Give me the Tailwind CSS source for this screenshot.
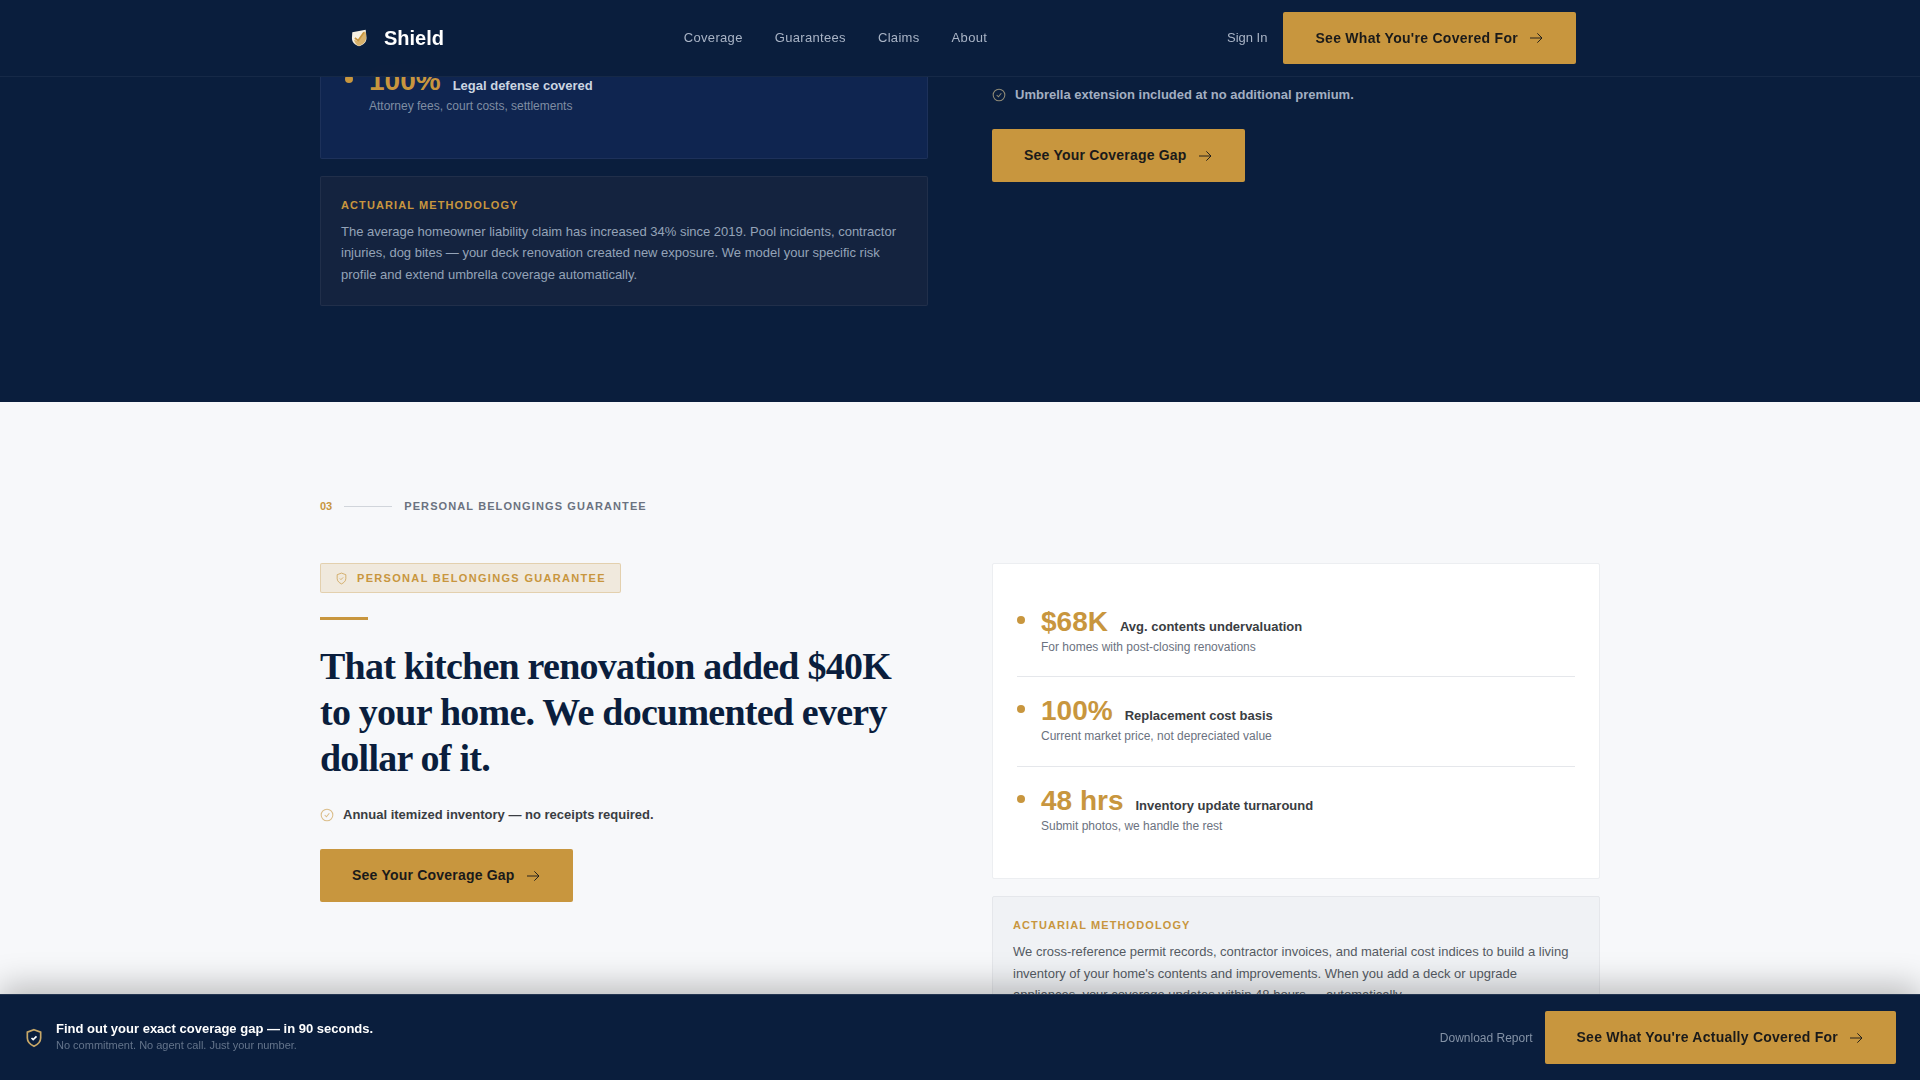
<!DOCTYPE html>
<html lang="en">
<head>
    <meta charset="UTF-8">
    <meta name="viewport" content="width=device-width, initial-scale=1.0">
    <title>Shield - Coverage Guarantees</title>
    <script src="https://cdn.jsdelivr.net/npm/@tailwindcss/browser@4"></script>
</head>
<body class="h-screen overflow-hidden bg-[#0a1e3d] font-['Liberation_Sans',Arial,sans-serif]">
    <!-- Navigation Bar -->
    <nav class="fixed top-0 left-0 right-0 z-20 h-[77px] bg-[#0a1e3d]/97 backdrop-blur border-b border-white/5">
        <div class="w-[1280px] h-full mx-auto px-6 flex items-center justify-between">
            <div class="flex items-center gap-[15px]">
                <svg class="ml-[5px]" width="20" height="20" viewBox="0 0 24 24">
                    <path d="M4 5 L20 2 L21 12 C21 17 17 20.5 12 22 C7 20.5 3.5 17 3.5 12 Z" fill="#f6f0e2"/>
                    <path d="M6 14 L11 16 L19 4 L20.5 6 L20.5 12 C20.5 16 17 20 12 21.5 C9 20.5 7 18 6 14 Z" fill="#d8b26c"/>
                    <path d="M7 12 L11 15 L18 5" fill="none" stroke="#c8963e" stroke-width="2"/>
                </svg>
                <span class="text-white text-[20px] font-bold">Shield</span>
            </div>
            <div class="flex items-center gap-8 text-[13px] tracking-[0.025em] text-[#a9b4c6]">
                <a>Coverage</a>
                <a>Guarantees</a>
                <a>Claims</a>
                <a>About</a>
            </div>
            <div class="flex items-center gap-4">
                <a class="text-[13px] text-[#a9b4c6]">Sign In</a>
                <a class="h-[52px] px-8 flex items-center gap-[10px] rounded-[2px] bg-[#c8963e] text-[#1a1a1a] text-[14px] font-bold tracking-[0.28px]">
                    See What You're Covered For
                    <svg width="16" height="16" viewBox="0 0 24 24" fill="none" stroke="currentColor" stroke-width="1.4"><path d="M3 12h18M14 5l7 7-7 7"/></svg>
                </a>
            </div>
        </div>
    </nav>

    <!-- Section 02, scrolled past the top -->
    <section class="bg-[#0a1e3d] pb-24">
        <div class="w-[1280px] mx-auto grid grid-cols-2 gap-16 items-start">
            <div class="flex flex-col gap-[17px]">
                <div class="pt-[46px] pb-[22px] px-6 bg-[#0f2550] border border-t-0 border-white/6 rounded-b-[2px]">
                    <div class="flex gap-4 pt-[19px] pb-[21px]">
                        <span class="w-2 h-2 mt-[10px] rounded-full bg-[#c8963e] shrink-0"></span>
                        <div>
                            <div class="flex items-baseline gap-3">
                                <span class="text-[28px] leading-8 font-bold text-[#c8963e]">100%</span>
                                <span class="text-[13px] font-bold text-[#cbd5e1]">Legal defense covered</span>
                            </div>
                            <p class="mt-px text-[12px] leading-[17px] text-[#7f8da3]">Attorney fees, court costs, settlements</p>
                        </div>
                    </div>
                </div>
                <div class="p-5 bg-[#14233f] border border-white/6 rounded-[2px]">
                    <p class="text-[11px] leading-4 mb-2 font-bold tracking-[0.1em] text-[#c8963e]">ACTUARIAL METHODOLOGY</p>
                    <p class="text-[13px] leading-[21.45px] text-[#94a3b8]">The average homeowner liability claim has increased 34% since 2019. Pool incidents, contractor injuries, dog bites — your deck renovation created new exposure. We model your specific risk profile and extend umbrella coverage automatically.</p>
                </div>
            </div>
            <div class="pt-[84px]">
                <div class="flex items-center gap-[9px] h-[21px] mb-6 text-[13px] font-bold text-[#a3afc2]">
                    <svg width="14" height="14" viewBox="0 0 24 24" fill="none" stroke="#8f8a76" stroke-width="1.8"><circle cx="12" cy="12" r="10"/><path d="M8 12l3 3 5-6"/></svg>
                    Umbrella extension included at no additional premium.
                </div>
                <a class="inline-flex items-center gap-[10px] h-[53px] px-8 rounded-[2px] bg-[#c8963e] text-[#1a1a1a] text-[14px] font-bold tracking-[0.21px]">
                    See Your Coverage Gap
                    <svg width="16" height="16" viewBox="0 0 24 24" fill="none" stroke="currentColor" stroke-width="1.4"><path d="M3 12h18M14 5l7 7-7 7"/></svg>
                </a>
            </div>
        </div>
    </section>

    <!-- Section 03 -->
    <section class="bg-[#f7f8fa] pt-24 h-[700px]">
        <div class="w-[1280px] mx-auto">
            <div class="flex items-center gap-3 h-4 mb-[49px]">
                <span class="text-[11px] font-bold text-[#c8963e]">03</span>
                <span class="w-12 h-px bg-[#d1d5db]"></span>
                <span class="text-[11px] font-bold tracking-[0.1em] text-[#6b7280]">PERSONAL BELONGINGS GUARANTEE</span>
            </div>
            <div class="grid grid-cols-2 gap-16 items-start">
                <div>
                    <div class="inline-flex items-center gap-[9px] h-[30px] px-[14px] bg-[#c8963e]/15 border border-[#c8963e]/30 rounded-[2px] text-[11px] font-bold tracking-[0.12em] text-[#c8963e]">
                        <svg width="13" height="13" viewBox="0 0 24 24" fill="none" stroke="#c8963e" stroke-width="1.8" stroke-opacity="0.7"><path d="M12 2 L20 5 V12 C20 17 16 20 12 22 C8 20 4 17 4 12 V5 Z"/><path d="M9 12l2 2 4-4"/></svg>
                        PERSONAL BELONGINGS GUARANTEE
                    </div>
                    <div class="w-12 h-[3px] mt-6 mb-6 bg-[#c8963e]"></div>
                    <h2 class="font-['Liberation_Serif',serif] text-[38px] leading-[45.6px] font-bold tracking-[-0.02em] text-[#0a1e3d] mb-[23px]">That kitchen renovation added $40K to your home. We documented every dollar of it.</h2>
                    <div class="flex items-center gap-[9px] h-[21px] mb-6 text-[13px] font-bold text-[#3a3d42]">
                        <svg width="14" height="14" viewBox="0 0 24 24" fill="none" stroke="#c8963e" stroke-opacity="0.6" stroke-width="1.8"><circle cx="12" cy="12" r="10"/><path d="M8 12l3 3 5-6"/></svg>
                        Annual itemized inventory — no receipts required.
                    </div>
                    <a class="inline-flex items-center gap-[10px] h-[53px] px-8 rounded-[2px] bg-[#c8963e] text-[#1a1a1a] text-[14px] font-bold tracking-[0.21px]">
                        See Your Coverage Gap
                        <svg width="16" height="16" viewBox="0 0 24 24" fill="none" stroke="currentColor" stroke-width="1.4"><path d="M3 12h18M14 5l7 7-7 7"/></svg>
                    </a>
                </div>
                <div class="flex flex-col gap-[17px]">
                    <div class="px-6 pt-[23px] pb-[22px] bg-white border border-[#eceef1] rounded-[2px]">
                        <div class="flex gap-4 pt-[19px] pb-[20px] border-b border-[#e5e7eb]">
                            <span class="w-2 h-2 mt-[10px] rounded-full bg-[#c8963e] shrink-0"></span>
                            <div>
                                <div class="flex items-baseline gap-3">
                                    <span class="text-[28px] leading-8 font-bold text-[#c8963e]">$68K</span>
                                    <span class="text-[13px] font-bold text-[#3a3d42]">Avg. contents undervaluation</span>
                                </div>
                                <p class="mt-px text-[12px] leading-[17px] text-[#6b7280]">For homes with post-closing renovations</p>
                            </div>
                        </div>
                        <div class="flex gap-4 pt-[18px] pb-[21px] border-b border-[#e5e7eb]">
                            <span class="w-2 h-2 mt-[10px] rounded-full bg-[#c8963e] shrink-0"></span>
                            <div>
                                <div class="flex items-baseline gap-3">
                                    <span class="text-[28px] leading-8 font-bold text-[#c8963e]">100%</span>
                                    <span class="text-[13px] font-bold text-[#3a3d42]">Replacement cost basis</span>
                                </div>
                                <p class="mt-px text-[12px] leading-[17px] text-[#6b7280]">Current market price, not depreciated value</p>
                            </div>
                        </div>
                        <div class="flex gap-4 pt-[18px] pb-[21px]">
                            <span class="w-2 h-2 mt-[10px] rounded-full bg-[#c8963e] shrink-0"></span>
                            <div>
                                <div class="flex items-baseline gap-3">
                                    <span class="text-[28px] leading-8 font-bold text-[#c8963e]">48 hrs</span>
                                    <span class="text-[13px] font-bold text-[#3a3d42]">Inventory update turnaround</span>
                                </div>
                                <p class="mt-px text-[12px] leading-[17px] text-[#6b7280]">Submit photos, we handle the rest</p>
                            </div>
                        </div>
                    </div>
                    <div class="p-5 bg-[#f0f2f5] border border-[#e5e7eb] rounded-[2px]">
                        <p class="text-[11px] leading-4 mb-2 font-bold tracking-[0.1em] text-[#c8963e]">ACTUARIAL METHODOLOGY</p>
                        <p class="text-[13px] leading-[21.45px] text-[#555b63]">We cross-reference permit records, contractor invoices, and material cost indices to build a living inventory of your home's contents and improvements. When you add a deck or upgrade appliances, your coverage updates within 48 hours — automatically.</p>
                    </div>
                </div>
            </div>
        </div>
    </section>

    <!-- Sticky bottom bar -->
    <div class="fixed bottom-0 left-0 right-0 z-20 h-[86px] px-6 flex items-center justify-between bg-[#0a1e3d] border-t border-white/10 shadow-[0_-8px_32px_rgba(0,0,0,0.25)]">
        <div class="flex items-center gap-3">
            <svg width="20" height="20" viewBox="0 0 24 24" fill="none" stroke="#c8a868" stroke-width="2"><path d="M12 2 L20 5 V12 C20 17 16 20 12 22 C8 20 4 17 4 12 V5 Z"/><path d="M9 12l2 2 4-4" stroke="#ffffff"/></svg>
            <div class="mb-[2px]">
                <p class="text-[13px] leading-[17px] font-bold text-white">Find out your exact coverage gap — in 90 seconds.</p>
                <p class="mt-px text-[11px] leading-[15px] text-[#64748b]">No commitment. No agent call. Just your number.</p>
            </div>
        </div>
        <div class="flex items-center gap-3">
            <a class="text-[12px] text-[#8492a6]">Download Report</a>
            <a class="h-[53px] px-8 flex items-center gap-[10px] rounded-[2px] bg-[#c8963e] text-[#1a1a1a] text-[14px] font-bold tracking-[0.24px]">
                See What You're Actually Covered For
                <svg width="16" height="16" viewBox="0 0 24 24" fill="none" stroke="currentColor" stroke-width="1.4"><path d="M3 12h18M14 5l7 7-7 7"/></svg>
            </a>
        </div>
    </div>
</body>
</html>
